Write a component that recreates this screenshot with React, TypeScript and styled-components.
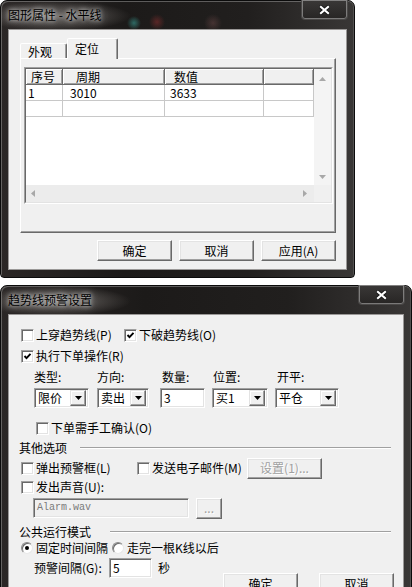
import React from "react";
import styled, { createGlobalStyle } from "styled-components";

const GlobalStyle = createGlobalStyle`
  html, body {
    margin: 0;
    padding: 0;
    background: #ffffff;
  }
  body {
    font-family: "Noto Sans CJK SC", "Liberation Sans", sans-serif;
    font-size: 12px;
    line-height: 16px;
    color: #000;
  }
`;

const Page = styled.div`
  width: 412px;
  height: 587px;
  overflow: hidden;
  display: flex;
  flex-direction: column;
  gap: 7px;
`;

// ---- window frame (Win7 basic) ----
const Window = styled.div<{ $w: number; $h: number }>`
  box-sizing: border-box;
  flex: none;
  width: ${(p) => p.$w}px;
  height: ${(p) => p.$h}px;
  display: flex;
  flex-direction: column;
  padding: 0 7px 7px 7px;
  border: 1px solid #0b0b0b;
  border-radius: 7px 7px 4px 4px;
  background: linear-gradient(90deg, #2b2726 0%, #1c1a19 35%, #211f1e 70%, #393736 100%);
  box-shadow: inset 1px 1px 0 rgba(170, 170, 170, 0.45), inset -1px 0 0 rgba(120, 120, 120, 0.4);
`;

const TitleBar = styled.div<{ $spots?: boolean }>`
  height: 28px;
  margin: 0 -7px;
  padding: 0 6px 0 7px;
  display: flex;
  justify-content: space-between;
  align-items: flex-start;
  background: ${(p) =>
    p.$spots
      ? `radial-gradient(circle at 133px 22px, rgba(60, 170, 160, 0.55) 0, rgba(60, 170, 160, 0) 7px),
         radial-gradient(circle at 156px 21px, rgba(150, 50, 50, 0.5) 0, rgba(150, 50, 50, 0) 8px),
         radial-gradient(circle at 212px 22px, rgba(140, 90, 90, 0.35) 0, rgba(140, 90, 90, 0) 9px),`
      : ""}
    radial-gradient(ellipse 75px 15px at 55px 15px, rgba(165, 160, 155, 0.6), rgba(165, 160, 155, 0));
`;

const Title = styled.div`
  padding-top: 7px;
  line-height: 14px;
  font-size: 12px;
  color: #000;
  white-space: nowrap;
  text-shadow: 0 0 4px rgba(235, 235, 235, 0.9), 0 0 8px rgba(220, 220, 220, 0.8);
`;

const CloseButton = styled.div`
  box-sizing: border-box;
  width: 47px;
  height: 20px;
  margin-top: -1px;
  border: 1px solid #4a4847;
  border-top: none;
  border-radius: 0 0 4px 4px;
  box-shadow: inset 0 0 0 1px rgba(190, 190, 190, 0.55);
  background: linear-gradient(#3a3837, #272524);
  display: flex;
  align-items: center;
  justify-content: center;
`;

const Client = styled.div`
  flex: 1;
  min-height: 0;
  box-sizing: border-box;
  background: #f0f0f0;
  border: 1px solid #9a9897;
  display: flex;
  flex-direction: column;
`;

const CloseX = () => (
  <svg width="11" height="10" viewBox="0 0 11 10">
    <path d="M2 2 L9 8 M9 2 L2 8" stroke="#1a1a1a" strokeWidth="4" strokeLinecap="square" />
    <path d="M2 2 L9 8 M9 2 L2 8" stroke="#ffffff" strokeWidth="2.2" strokeLinecap="square" />
  </svg>
);

// ---- common controls ----
const Button = styled.div<{ $w: number; $disabled?: boolean }>`
  box-sizing: border-box;
  flex: none;
  width: ${(p) => p.$w}px;
  height: 21px;
  border: 1px solid;
  border-color: #ffffff #696969 #696969 #ffffff;
  box-shadow: inset -1px -1px 0 #a0a0a0, inset 1px 1px 0 #e3e3e3;
  background: #f0f0f0;
  display: flex;
  align-items: center;
  justify-content: center;
  white-space: nowrap;
  color: ${(p) => (p.$disabled ? "#a0a0a0" : "#000")};
  text-shadow: ${(p) => (p.$disabled ? "1px 1px 0 #ffffff" : "none")};
`;

const Sunken = styled.div<{ $w: number; $disabled?: boolean }>`
  box-sizing: border-box;
  flex: none;
  width: ${(p) => p.$w}px;
  height: 20px;
  border: 1px solid;
  border-color: #a0a0a0 #ffffff #ffffff #a0a0a0;
  box-shadow: inset 1px 1px 0 #696969, inset -1px -1px 0 #e3e3e3;
  background: ${(p) => (p.$disabled ? "#f0f0f0" : "#ffffff")};
  padding: 2px;
  display: flex;
  align-items: center;
  white-space: nowrap;
`;

const EditText = styled.span<{ $mono?: boolean }>`
  flex: 1;
  padding-left: 1px;
  ${(p) =>
    p.$mono
      ? `font-family: "Liberation Mono", monospace; font-size: 10px; color: #7a7a7a;`
      : ""}
`;

const DropButton = styled.div`
  box-sizing: border-box;
  width: 16px;
  height: 16px;
  border: 1px solid;
  border-color: #e3e3e3 #696969 #696969 #e3e3e3;
  box-shadow: inset -1px -1px 0 #a0a0a0, inset 1px 1px 0 #ffffff;
  background: #f0f0f0;
  display: flex;
  align-items: center;
  justify-content: center;
`;

const DownTri = () => (
  <svg width="7" height="4" viewBox="0 0 7 4">
    <path d="M0 0 H7 L3.5 4 Z" fill="#000" />
  </svg>
);

const Select = ({ w, value }: { w: number; value: string }) => (
  <Sunken $w={w}>
    <EditText>{value}</EditText>
    <DropButton>
      <DownTri />
    </DropButton>
  </Sunken>
);

const CheckItem = styled.div<{ $w?: number }>`
  display: flex;
  align-items: center;
  gap: 2px;
  flex: none;
  white-space: nowrap;
  ${(p) => (p.$w ? `width: ${p.$w}px;` : "")}
`;

const Box = styled.span`
  box-sizing: border-box;
  width: 13px;
  height: 13px;
  flex: none;
  border: 1px solid;
  border-color: #a0a0a0 #ffffff #ffffff #a0a0a0;
  box-shadow: inset 1px 1px 0 #696969, inset -1px -1px 0 #e3e3e3;
  background: #ffffff;
  display: flex;
  align-items: center;
  justify-content: center;
`;

const Check = ({ checked, w, children }: { checked?: boolean; w?: number; children: React.ReactNode }) => (
  <CheckItem $w={w}>
    <Box>
      {checked && (
        <svg width="9" height="9" viewBox="0 0 9 9">
          <polyline points="1.5,4 3.5,6.2 7.5,1.8" fill="none" stroke="#000" strokeWidth="1.9" />
        </svg>
      )}
    </Box>
    <span>{children}</span>
  </CheckItem>
);

const RadioCircle = styled.span`
  box-sizing: border-box;
  width: 12px;
  height: 12px;
  flex: none;
  border-radius: 50%;
  border: 1px solid;
  border-color: #8a8a8a #e8e8e8 #e8e8e8 #8a8a8a;
  background: #ffffff;
  box-shadow: inset 1px 1px 0 #6a6a6a;
  display: flex;
  align-items: center;
  justify-content: center;
`;

const Dot = styled.span`
  width: 4px;
  height: 4px;
  border-radius: 50%;
  background: #000;
`;

const Radio = ({ on, w, children }: { on?: boolean; w?: number; children: React.ReactNode }) => (
  <CheckItem $w={w}>
    <RadioCircle>{on && <Dot />}</RadioCircle>
    <span style={{ marginLeft: 1 }}>{children}</span>
  </CheckItem>
);

// ---- top dialog: tabs + list ----
const TopBody = styled.div`
  padding: 9px 10px 0 11px;
  display: flex;
  flex-direction: column;
`;

const TabStrip = styled.div`
  height: 19px;
  display: flex;
  align-items: flex-end;
`;

const Tab = styled.div<{ $w: number; $active?: boolean }>`
  box-sizing: border-box;
  position: relative;
  z-index: ${(p) => (p.$active ? 1 : 0)};
  width: ${(p) => p.$w}px;
  height: ${(p) => (p.$active ? 21 : 15)}px;
  margin-bottom: ${(p) => (p.$active ? -1 : 0)}px;
  padding: ${(p) => (p.$active ? "2px 0 0 7px" : "0 0 0 7px")};
  border: 1px solid;
  border-bottom: none;
  border-color: #ffffff #696969 transparent #ffffff;
  box-shadow: inset -1px 0 0 #a0a0a0;
  border-radius: 2px 2px 0 0;
  background: #f0f0f0;
  white-space: nowrap;
`;

const TabPanel = styled.div`
  box-sizing: border-box;
  width: 316px;
  height: 175px;
  border: 1px solid;
  border-color: #ffffff #696969 #696969 #ffffff;
  box-shadow: inset -1px -1px 0 #a0a0a0;
  padding: 8px 0 0 3px;
`;

const ListOuter = styled.div`
  box-sizing: border-box;
  width: 309px;
  height: 137px;
  border: 1px solid;
  border-color: #a0a0a0 #ffffff #ffffff #a0a0a0;
`;

const ListInner = styled.div`
  box-sizing: border-box;
  height: 100%;
  border: 1px solid;
  border-color: #696969 #e3e3e3 #e3e3e3 #696969;
  background: #ffffff;
  display: grid;
  grid-template-columns: 1fr 17px;
  grid-template-rows: 1fr 17px;
`;

const Table = styled.div`
  overflow: hidden;
`;

const HeaderRow = styled.div`
  display: flex;
  height: 16px;
`;

const HeaderCell = styled.div<{ $w?: number; $pad: number }>`
  box-sizing: border-box;
  ${(p) => (p.$w ? `width: ${p.$w}px; flex: none;` : "flex: 1;")}
  height: 16px;
  padding-left: ${(p) => p.$pad}px;
  line-height: 15px;
  background: #f0f0f0;
  border-right: 1px solid #696969;
  border-bottom: 1px solid #696969;
  box-shadow: inset 1px 1px 0 #ffffff, inset -1px -1px 0 #a0a0a0;
  white-space: nowrap;
`;

const DataRow = styled.div`
  display: flex;
  height: 16px;
`;

const DataCell = styled.div<{ $w?: number; $pad: number }>`
  box-sizing: border-box;
  ${(p) => (p.$w ? `width: ${p.$w}px; flex: none;` : "flex: 1;")}
  height: 16px;
  padding-left: ${(p) => p.$pad}px;
  line-height: 15px;
  border-right: 1px solid #c8c8c8;
  border-bottom: 1px solid #c8c8c8;
  white-space: nowrap;
`;

const VScroll = styled.div`
  background: #f4f4f4;
  display: flex;
  flex-direction: column;
  justify-content: space-between;
  align-items: center;
  padding: 8px 0 6px;
`;

const HScroll = styled.div`
  background: #ececec;
  display: flex;
  justify-content: space-between;
  align-items: center;
  padding: 0 7px 0 5px;
`;

const Corner = styled.div`
  background: #f0f0f0;
`;

const Arrow = ({ dir }: { dir: "up" | "down" | "left" | "right" }) => {
  const d = {
    up: "M0 4 L3.5 0 L7 4 Z",
    down: "M0 0 H7 L3.5 4 Z",
    left: "M4 0 V7 L0 3.5 Z",
    right: "M0 0 V7 L4 3.5 Z",
  }[dir];
  const horiz = dir === "left" || dir === "right";
  return (
    <svg width={horiz ? 4 : 7} height={horiz ? 7 : 4} viewBox={horiz ? "0 0 4 7" : "0 0 7 4"}>
      <path d={d} fill="#a8a8a8" />
    </svg>
  );
};

const ButtonRow = styled.div<{ $gap: number }>`
  display: flex;
  justify-content: flex-end;
  gap: ${(p) => p.$gap}px;
  margin-top: 7px;
`;

const columns = [
  { title: "序号", w: 37, hp: 5, dp: 2 },
  { title: "周期", w: 102, hp: 13, dp: 7 },
  { title: "数值", w: 99, hp: 9, dp: 5 },
];

const rows = [["1", "3010", "3633"], ["", "", ""]];

// ---- bottom dialog ----
const FormBody = styled.div`
  display: flex;
  flex-direction: column;
  padding-right: 12px;
`;

const FormRow = styled.div<{ $mt: number; $pl: number; $h?: number }>`
  display: flex;
  align-items: center;
  flex: none;
  height: ${(p) => p.$h ?? 16}px;
  margin-top: ${(p) => p.$mt}px;
  padding-left: ${(p) => p.$pl}px;
  white-space: nowrap;
`;

const ParamGrid = styled.div`
  display: grid;
  grid-template-columns: 63px 63px 52px 63px 64px;
  grid-template-rows: 16px 20px;
  row-gap: 3px;
  margin-top: 5px;
  padding-left: 25px;
`;

const ParamLabel = styled.div<{ $pl: number }>`
  padding-left: ${(p) => p.$pl}px;
`;

const GroupLabel = styled.span<{ $w: number }>`
  width: ${(p) => p.$w}px;
  flex: none;
`;

const GroupLine = styled.span`
  flex: 1;
  height: 0;
  border-top: 1px solid #a0a0a0;
  border-bottom: 1px solid #ffffff;
`;

const FixedText = styled.span<{ $w: number; $ml?: number }>`
  width: ${(p) => p.$w}px;
  margin-left: ${(p) => p.$ml ?? 0}px;
  flex: none;
`;

const BottomButtons = styled.div`
  display: flex;
  gap: 21px;
  align-self: flex-start;
  margin-top: 15px;
  margin-left: 53px;
`;

const params = [
  { label: "类型:", pl: 0, kind: "select", w: 55, value: "限价" },
  { label: "方向:", pl: 0, kind: "select", w: 52, value: "卖出" },
  { label: "数量:", pl: 2, kind: "edit", w: 45, value: "3" },
  { label: "位置:", pl: 1, kind: "select", w: 56, value: "买1" },
  { label: "开平:", pl: 2, kind: "select", w: 64, value: "平仓" },
];

export default function App() {
  return (
    <Page>
      <GlobalStyle />
      <Window $w={355} $h={278}>
        <TitleBar $spots>
          <Title>图形属性 - 水平线</Title>
          <CloseButton>
            <CloseX />
          </CloseButton>
        </TitleBar>
        <Client>
          <TopBody>
            <TabStrip>
              <Tab $w={47}>外观</Tab>
              <Tab $w={51} $active>
                定位
              </Tab>
            </TabStrip>
            <TabPanel>
              <ListOuter>
                <ListInner>
                  <Table>
                    <HeaderRow>
                      {columns.map((c) => (
                        <HeaderCell key={c.title} $w={c.w} $pad={c.hp}>
                          {c.title}
                        </HeaderCell>
                      ))}
                      <HeaderCell $pad={0} />
                    </HeaderRow>
                    {rows.map((r, i) => (
                      <DataRow key={i}>
                        {columns.map((c, j) => (
                          <DataCell key={c.title} $w={c.w} $pad={c.dp}>
                            {r[j]}
                          </DataCell>
                        ))}
                        <DataCell $pad={0} />
                      </DataRow>
                    ))}
                  </Table>
                  <VScroll>
                    <Arrow dir="up" />
                    <Arrow dir="down" />
                  </VScroll>
                  <HScroll>
                    <Arrow dir="left" />
                    <Arrow dir="right" />
                  </HScroll>
                  <Corner />
                </ListInner>
              </ListOuter>
            </TabPanel>
            <ButtonRow $gap={7}>
              <Button $w={75}>确定</Button>
              <Button $w={75}>取消</Button>
              <Button $w={75}>应用(A)</Button>
            </ButtonRow>
          </TopBody>
        </Client>
      </Window>

      <Window $w={412} $h={312}>
        <TitleBar>
          <Title>趋势线预警设置</Title>
          <CloseButton>
            <CloseX />
          </CloseButton>
        </TitleBar>
        <Client>
          <FormBody>
            <FormRow $mt={12} $pl={12}>
              <Check w={103}>上穿趋势线(P)</Check>
              <Check checked>下破趋势线(O)</Check>
            </FormRow>
            <FormRow $mt={5} $pl={12}>
              <Check checked>执行下单操作(R)</Check>
            </FormRow>
            <ParamGrid>
              {params.map((p) => (
                <ParamLabel key={p.label} $pl={p.pl}>
                  {p.label}
                </ParamLabel>
              ))}
              {params.map((p) =>
                p.kind === "select" ? (
                  <Select key={p.label} w={p.w} value={p.value} />
                ) : (
                  <Sunken key={p.label} $w={p.w}>
                    <EditText>{p.value}</EditText>
                  </Sunken>
                )
              )}
            </ParamGrid>
            <FormRow $mt={12} $pl={27}>
              <Check>下单需手工确认(O)</Check>
            </FormRow>
            <FormRow $mt={4} $pl={10}>
              <GroupLabel $w={61}>其他选项</GroupLabel>
              <GroupLine />
            </FormRow>
            <FormRow $mt={2} $pl={12} $h={20}>
              <Check w={116}>弹出预警框(L)</Check>
              <Check w={110}>发送电子邮件(M)</Check>
              <Button $w={75} $disabled>
                设置(1)...
              </Button>
            </FormRow>
            <FormRow $mt={1} $pl={12}>
              <Check>发出声音(U):</Check>
            </FormRow>
            <FormRow $mt={3} $pl={24} $h={20}>
              <Sunken $w={156} $disabled>
                <EditText $mono>Alarm.wav</EditText>
              </Sunken>
              <FixedText $w={7} />
              <Button $w={26} $disabled>
                ...
              </Button>
            </FormRow>
            <FormRow $mt={6} $pl={10}>
              <GroupLabel $w={91}>公共运行模式</GroupLabel>
              <GroupLine />
            </FormRow>
            <FormRow $mt={0} $pl={12}>
              <Radio on w={91}>
                固定时间间隔
              </Radio>
              <Radio>走完一根K线以后</Radio>
            </FormRow>
            <FormRow $mt={2} $pl={25} $h={20}>
              <FixedText $w={75}>预警间隔(G):</FixedText>
              <Sunken $w={43}>
                <EditText>5</EditText>
              </Sunken>
              <FixedText $w={12} $ml={6}>
                秒
              </FixedText>
              <BottomButtons>
                <Button $w={75}>确定</Button>
                <Button $w={75}>取消</Button>
              </BottomButtons>
            </FormRow>
          </FormBody>
        </Client>
      </Window>
    </Page>
  );
}
